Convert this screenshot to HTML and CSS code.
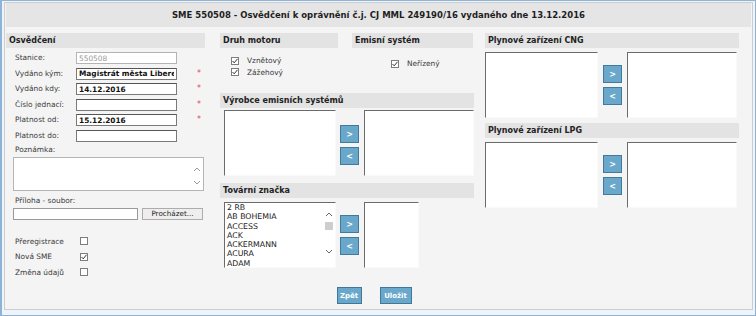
FILE: index.html
```html
<!DOCTYPE html>
<html lang="cs">
<head>
<meta charset="UTF-8">
<title>SME 550508 - Osvědčení</title>
<link rel="stylesheet" href="styles.css">
</head>
<body>
<div class="frame">
  <div class="panel">
    <div class="title">SME 550508 - Osvědčení k oprávnění č.j. CJ MML 249190/16 vydaného dne 13.12.2016</div>

    <div class="content">
      <!-- levý sloupec -->
      <div class="col col-left">
        <div class="section-head">Osvědčení</div>
        <div class="fields">
          <label>Stanice:</label><input class="field disabled" value="550508" readonly><span></span>
          <label>Vydáno kým:</label><input class="field strong" value="Magistrát města Liberec" readonly><span class="req">*</span>
          <label>Vydáno kdy:</label><input class="field strong" value="14.12.2016" readonly><span class="req">*</span>
          <label>Číslo jednací:</label><input class="field" value="" readonly><span class="req">*</span>
          <label>Platnost od:</label><input class="field strong" value="15.12.2016" readonly><span class="req">*</span>
          <label>Platnost do:</label><input class="field" value="" readonly><span></span>
        </div>

        <div class="note-label">Poznámka:</div>
        <div class="note-box">
          <svg class="chev chev-up" width="8" height="5" viewBox="0 0 8 5"><polyline points="1,4 4,1 7,4" fill="none" stroke="#9a9a9a" stroke-width="1"/></svg>
          <svg class="chev chev-down" width="8" height="5" viewBox="0 0 8 5"><polyline points="1,1 4,4 7,1" fill="none" stroke="#9a9a9a" stroke-width="1"/></svg>
        </div>

        <div class="file-label">Příloha - soubor:</div>
        <div class="file-row">
          <div class="file-input"></div>
          <button class="browse" type="button">Procházet...</button>
        </div>

        <div class="flags">
          <span>Přeregistrace</span><span class="cb"></span>
          <span>Nová SME</span><span class="cb"><svg width="8" height="8" viewBox="0 0 8 8"><polyline points="1.5,4 3.2,5.8 6.5,1.8" fill="none" stroke="#333" stroke-width="1"/></svg></span>
          <span>Změna údajů</span><span class="cb"></span>
        </div>
      </div>

      <!-- prostřední sloupec -->
      <div class="col col-mid">
        <div class="top-row">
          <div class="sub sub-engine">
            <div class="section-head">Druh motoru</div>
            <div class="checks checks-engine">
              <div class="check"><span class="cb"><svg width="8" height="8" viewBox="0 0 8 8"><polyline points="1.5,4 3.2,5.8 6.5,1.8" fill="none" stroke="#333" stroke-width="1"/></svg></span>Vznětový</div>
              <div class="check"><span class="cb"><svg width="8" height="8" viewBox="0 0 8 8"><polyline points="1.5,4 3.2,5.8 6.5,1.8" fill="none" stroke="#333" stroke-width="1"/></svg></span>Zážehový</div>
            </div>
          </div>
          <div class="sub sub-emis">
            <div class="section-head">Emisní systém</div>
            <div class="checks checks-emis">
              <div class="check"><span class="cb"><svg width="8" height="8" viewBox="0 0 8 8"><polyline points="1.5,4 3.2,5.8 6.5,1.8" fill="none" stroke="#333" stroke-width="1"/></svg></span>Neřízený</div>
            </div>
          </div>
        </div>

        <div class="section-head">Výrobce emisních systémů</div>
        <div class="dual dual-mid dual-first">
          <div class="listbox list-left"></div>
          <div class="movers">
            <button class="mover" type="button">&gt;</button>
            <button class="mover" type="button">&lt;</button>
          </div>
          <div class="listbox list-right"></div>
        </div>

        <div class="section-head head-brand">Tovární značka</div>
        <div class="dual dual-mid dual-brand">
          <div class="listbox list-left brand-list">
            <div>2 RB</div>
            <div>AB BOHEMIA</div>
            <div>ACCESS</div>
            <div>ACK</div>
            <div>ACKERMANN</div>
            <div>ACURA</div>
            <div>ADAM</div>
            <div class="vscroll">
              <svg width="8" height="5" viewBox="0 0 8 5"><polyline points="1,4 4,1 7,4" fill="none" stroke="#666" stroke-width="1"/></svg>
              <span class="thumb"></span>
              <svg width="8" height="5" viewBox="0 0 8 5"><polyline points="1,1 4,4 7,1" fill="none" stroke="#666" stroke-width="1"/></svg>
            </div>
          </div>
          <div class="movers">
            <button class="mover" type="button">&gt;</button>
            <button class="mover" type="button">&lt;</button>
          </div>
          <div class="listbox list-right list-narrow"></div>
        </div>
      </div>

      <!-- pravý sloupec -->
      <div class="col col-right">
        <div class="section-head">Plynové zařízení CNG</div>
        <div class="dual">
          <div class="listbox list-left"></div>
          <div class="movers">
            <button class="mover" type="button">&gt;</button>
            <button class="mover" type="button">&lt;</button>
          </div>
          <div class="listbox list-right"></div>
        </div>

        <div class="section-head head-lpg">Plynové zařízení LPG</div>
        <div class="dual">
          <div class="listbox list-left"></div>
          <div class="movers">
            <button class="mover" type="button">&gt;</button>
            <button class="mover" type="button">&lt;</button>
          </div>
          <div class="listbox list-right"></div>
        </div>
      </div>
    </div>

    <div class="footer">
      <button class="action action-back" type="button">Zpět</button>
      <button class="action action-save" type="button">Uložit</button>
    </div>
  </div>
</div>
</body>
</html>
```

FILE: styles.css
```css
* {
    box-sizing: border-box;
}

body {
    margin: 0;
    font-family: "DejaVu Sans", Verdana, sans-serif;
    font-size: 7.4px;
    color: #3a3a3a;
    background: #fff;
}

.frame {
    width: 756px;
    height: 316px;
    border: 1px solid #8db4d6;
    border-left-width: 2px;
    background: #eef4f9;
    padding: 1px 2px 5px 2px;
}

.panel {
    height: 100%;
    border: 1px solid #cdcdcd;
    background: #f4f4f4;
    padding: 0 1px;
}

.title {
    height: 24px;
    line-height: 24px;
    background: #e5e5e5;
    text-align: center;
    font-weight: bold;
    font-size: 8.5px;
    color: #1e1e1e;
}

.content {
    display: flex;
    height: 256px;
    padding-top: 6px;
}

.col-left {
    width: 199px;
}
.col-mid {
    width: 254px;
    margin-left: 15px;
}
.col-right {
    width: 254px;
    margin-left: 11px;
}

.section-head {
    height: 15px;
    line-height: 15px;
    padding-left: 3px;
    background: #e3e3e3;
    font-weight: bold;
    font-size: 8px;
    color: #222;
}

/* levý sloupec */
.fields {
    display: grid;
    grid-template-columns: 70px 101px 1fr;
    grid-auto-rows: 12px;
    row-gap: 3.6px;
    margin-top: 4px;
}
.fields label {
    padding-left: 9px;
    line-height: 12px;
}
.field {
    width: 101px;
    height: 12px;
    margin: 0;
    padding: 0 2px;
    border: 1px solid #7a7a7a;
    border-top-color: #555;
    background: #fff;
    font-family: inherit;
    font-size: 7.4px;
    color: #111;
    outline: none;
}
.field.strong {
    font-weight: bold;
}
.field.disabled {
    border-color: #b4b4b4;
    color: #9a9a9a;
}
.req {
    padding-left: 20px;
    line-height: 12px;
    color: #e0485a;
    font-size: 8px;
}

.note-label {
    height: 8px;
    line-height: 8px;
    margin: 4px 0 3px 9px;
}
.note-box {
    position: relative;
    width: 191px;
    height: 34px;
    margin-left: 7px;
    background: #fff;
    border: 1px solid #b5b5b5;
}
.chev {
    position: absolute;
    right: 2px;
}
.chev-up {
    top: 9px;
}
.chev-down {
    top: 22px;
}

.file-label {
    height: 8px;
    line-height: 8px;
    margin: 6px 0 3px 9px;
}
.file-row {
    display: flex;
    margin-left: 7px;
    height: 12px;
}
.file-input {
    width: 125px;
    height: 12px;
    background: #fff;
    border: 1px solid #9a9a9a;
}
.browse {
    width: 61px;
    height: 12px;
    margin-left: 4px;
    padding: 0;
    border: 1px solid #adadad;
    background: #eeeeee;
    font-family: inherit;
    font-size: 7.2px;
    color: #222;
}

.flags {
    display: grid;
    grid-template-columns: 74px 8px;
    grid-auto-rows: 15.5px;
    align-items: center;
    margin-top: 13.5px;
}
.flags span:nth-child(odd) {
    padding-left: 9px;
}

.cb {
    display: inline-block;
    width: 8px;
    height: 8px;
    border: 1px solid #7d7d7d;
    background: #fff;
    position: relative;
}
.cb svg {
    position: absolute;
    left: -1px;
    top: -1px;
}

/* prostřední sloupec */
.top-row {
    display: flex;
    height: 60px;
}
.sub-engine {
    width: 118px;
}
.sub-emis {
    width: 121px;
    margin-left: 14px;
}
.checks-engine {
    margin-top: 7px;
    padding-left: 11px;
}
.checks-emis {
    margin-top: 10px;
    padding-left: 39px;
}
.check {
    display: flex;
    align-items: center;
    height: 11.5px;
}
.check .cb {
    margin-right: 8px;
}

.dual {
    display: flex;
    align-items: flex-start;
    margin-top: 4px;
}
.dual-mid {
    padding-left: 4px;
}
.dual-first {
    margin-top: 2px;
}
.head-brand {
    margin-top: 7px;
}
.head-lpg {
    margin-top: 5px;
}

.listbox {
    height: 66px;
    background: #fff;
    border: 1px solid;
    border-color: #6b6b6b #fafafa #fafafa #6b6b6b;
}
.list-left {
    width: 113px;
}
.dual-mid .list-left {
    width: 112px;
}
.list-right {
    width: 110px;
    margin-left: 5px;
}
.list-narrow {
    width: 55px;
}

.movers {
    display: flex;
    flex-direction: column;
    gap: 4px;
    margin-left: 5px;
    padding-top: 13px;
}
.dual-mid .movers {
    margin-left: 4px;
}
.dual-first .movers {
    padding-top: 15px;
}
.mover {
    width: 19px;
    height: 18px;
    padding: 0;
    border: 1px solid #427a9c;
    background: #69a8cb;
    color: #fff;
    font-family: inherit;
    font-weight: bold;
    font-size: 8px;
}

.brand-list {
    position: relative;
    padding-left: 2px;
    font-size: 7.8px;
    line-height: 9.3px;
    color: #222;
}
.vscroll {
    position: absolute;
    right: 1px;
    top: 9px;
    width: 10px;
    display: flex;
    flex-direction: column;
    align-items: center;
}
.thumb {
    width: 8px;
    height: 8px;
    margin: 5px 0 19px;
    background: #cdcdcd;
}

/* tlačítka dole */
.footer {
    display: flex;
    justify-content: center;
    gap: 18px;
    padding: 4px 9px 0 0;
}
.action {
    height: 17px;
    padding: 0;
    border: 1px solid #41789a;
    background: #69a8cb;
    color: #fff;
    font-family: inherit;
    font-weight: bold;
    font-size: 7px;
}
.action-back {
    width: 25px;
}
.action-save {
    width: 32px;
}
```
